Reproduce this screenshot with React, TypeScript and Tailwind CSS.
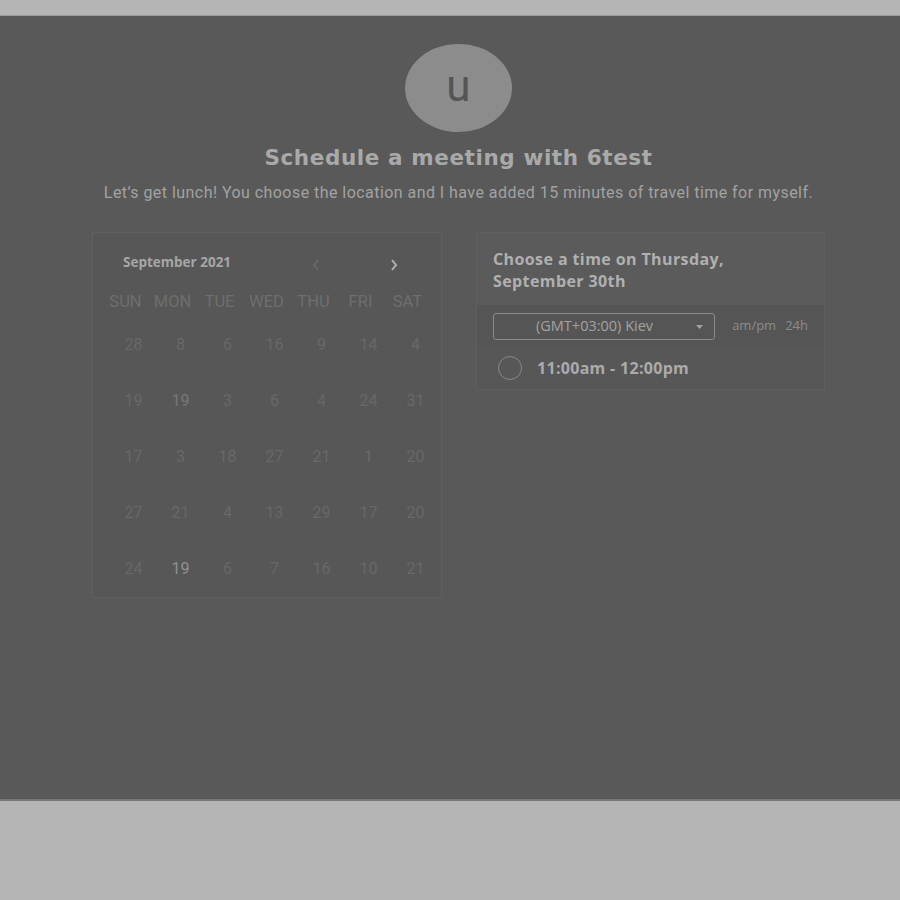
import React from 'react'

const days = ['SUN', 'MON', 'TUE', 'WED', 'THU', 'FRI', 'SAT']

const weeks = [
  [28, 8, 6, 16, 9, 14, 4],
  [19, 19, 3, 6, 4, 24, 31],
  [17, 3, 18, 27, 21, 1, 20],
  [27, 21, 4, 13, 29, 17, 20],
  [24, 19, 6, 7, 16, 10, 21],
]

// cells shown a bit lighter (available days)
const tone: Record<string, string> = {
  '1-1': 'text-[#777777]',
  '4-1': 'text-[#929292]',
}

const Calendar: React.FC = () => (
  <div className="w-[350px] h-[366px] border border-[#606060] bg-[#575757] pl-[9px] pr-[10px] font-['Roboto',sans-serif]">
    <div className="flex items-center h-[30px] mt-[14px]">
      <span className="ml-[21px] text-[13.5px] font-bold text-[#a6a6a6] font-['Open_Sans',sans-serif]">September 2021</span>
      <svg className="ml-[80px] mt-[6px]" width="10" height="14" viewBox="0 0 10 14">
        <path d="M7 2 L3 7 L7 12" fill="none" stroke="#6a6a6a" strokeWidth="1.5" />
      </svg>
      <svg className="ml-[68px] mt-[6px]" width="10" height="14" viewBox="0 0 10 14">
        <path d="M3 2 L7 7 L3 12" fill="none" stroke="#b2b2b2" strokeWidth="2" />
      </svg>
    </div>
    <div className="grid grid-cols-7 mt-[13px]">
      {days.map((d) => (
        <div key={d} className="text-center text-[16.5px] text-[#6e6e6e] leading-[24px]">
          {d}
        </div>
      ))}
    </div>
    <div className="mt-[3px]">
      {weeks.map((w, i) => (
        <div key={i} className="grid grid-cols-7 h-[56px] items-center">
          {w.map((n, j) => (
            <div key={j} className={`pl-4 text-center text-[16px] ${tone[`${i}-${j}`] ?? 'text-[#686868]'}`}>
              {n}
            </div>
          ))}
        </div>
      ))}
    </div>
  </div>
)

const TimePanel: React.FC = () => (
  <div className="w-[349px] border border-[#5f5f5f] font-['Open_Sans',sans-serif]">
    <div className="bg-[#5b5b5b] px-4 pt-[15px] pb-[13px] text-[16px] tracking-[0.4px] leading-[22px] font-bold text-[#b0b0b0]">
      Choose a time on Thursday,
      <br />
      September 30th
    </div>
    <div className="bg-[#555555] flex items-center px-4 h-[42px]">
      <div className="w-[223px] h-[27px] border border-[#8a8a8a] rounded-[3px] flex items-center relative">
        <span className="ml-[42px] text-[14.5px] text-[#a2a2a2]">(GMT+03:00) Kiev</span>
        <svg className="absolute right-[11px] top-[11px]" width="7" height="4" viewBox="0 0 7 4">
          <path d="M0 0 L7 0 L3.5 4 Z" fill="#a0a0a0" />
        </svg>
      </div>
      <span className="ml-[17px] text-[13px] text-[#8c8c8c]">am/pm</span>
      <span className="ml-[9px] text-[13px] text-[#8c8c8c]">24h</span>
    </div>
    <div className="bg-[#575757] flex items-center px-[21px] h-[42px]">
      <div className="w-[24px] h-[24px] rounded-full border-[1.5px] border-[#8a8a8a]" />
      <span className="ml-[15px] text-[16px] tracking-[0.3px] font-bold text-[#ababab]">11:00am - 12:00pm</span>
    </div>
  </div>
)

export default function App() {
  return (
    <div className="w-[900px] h-[900px] flex flex-col bg-[#b4b4b4]">
      <div className="h-[16px] bg-[#b5b5b5] border-b border-[#9c9c9c]" />
      <div className="h-[785px] bg-[#595959] border-b-2 border-[#777777] pl-[17px] flex flex-col items-center">
        <div className="mt-[28px] w-[107px] h-[88px] rounded-[50%] bg-[#8c8c8c] flex items-center justify-center">
          <span className="text-[44px] leading-none text-[#555555] font-['Roboto',sans-serif] -mt-[4px]">u</span>
        </div>
        <h1 className="mt-[12px] text-[21.5px] tracking-[0.6px] leading-[28px] font-bold text-[#a9a9a9] font-['DejaVu_Sans',sans-serif]">
          Schedule a meeting with 6test
        </h1>
        <p className="mt-[11px] text-[16px] tracking-[0.45px] leading-[20px] text-[#a2a2a2] font-['Roboto',sans-serif]">
          Let’s get lunch! You choose the location and I have added 15 minutes of travel time for myself.
        </p>
        <div className="mt-[29px] flex items-start gap-[34px]">
          <Calendar />
          <TimePanel />
        </div>
      </div>
    </div>
  )
}
